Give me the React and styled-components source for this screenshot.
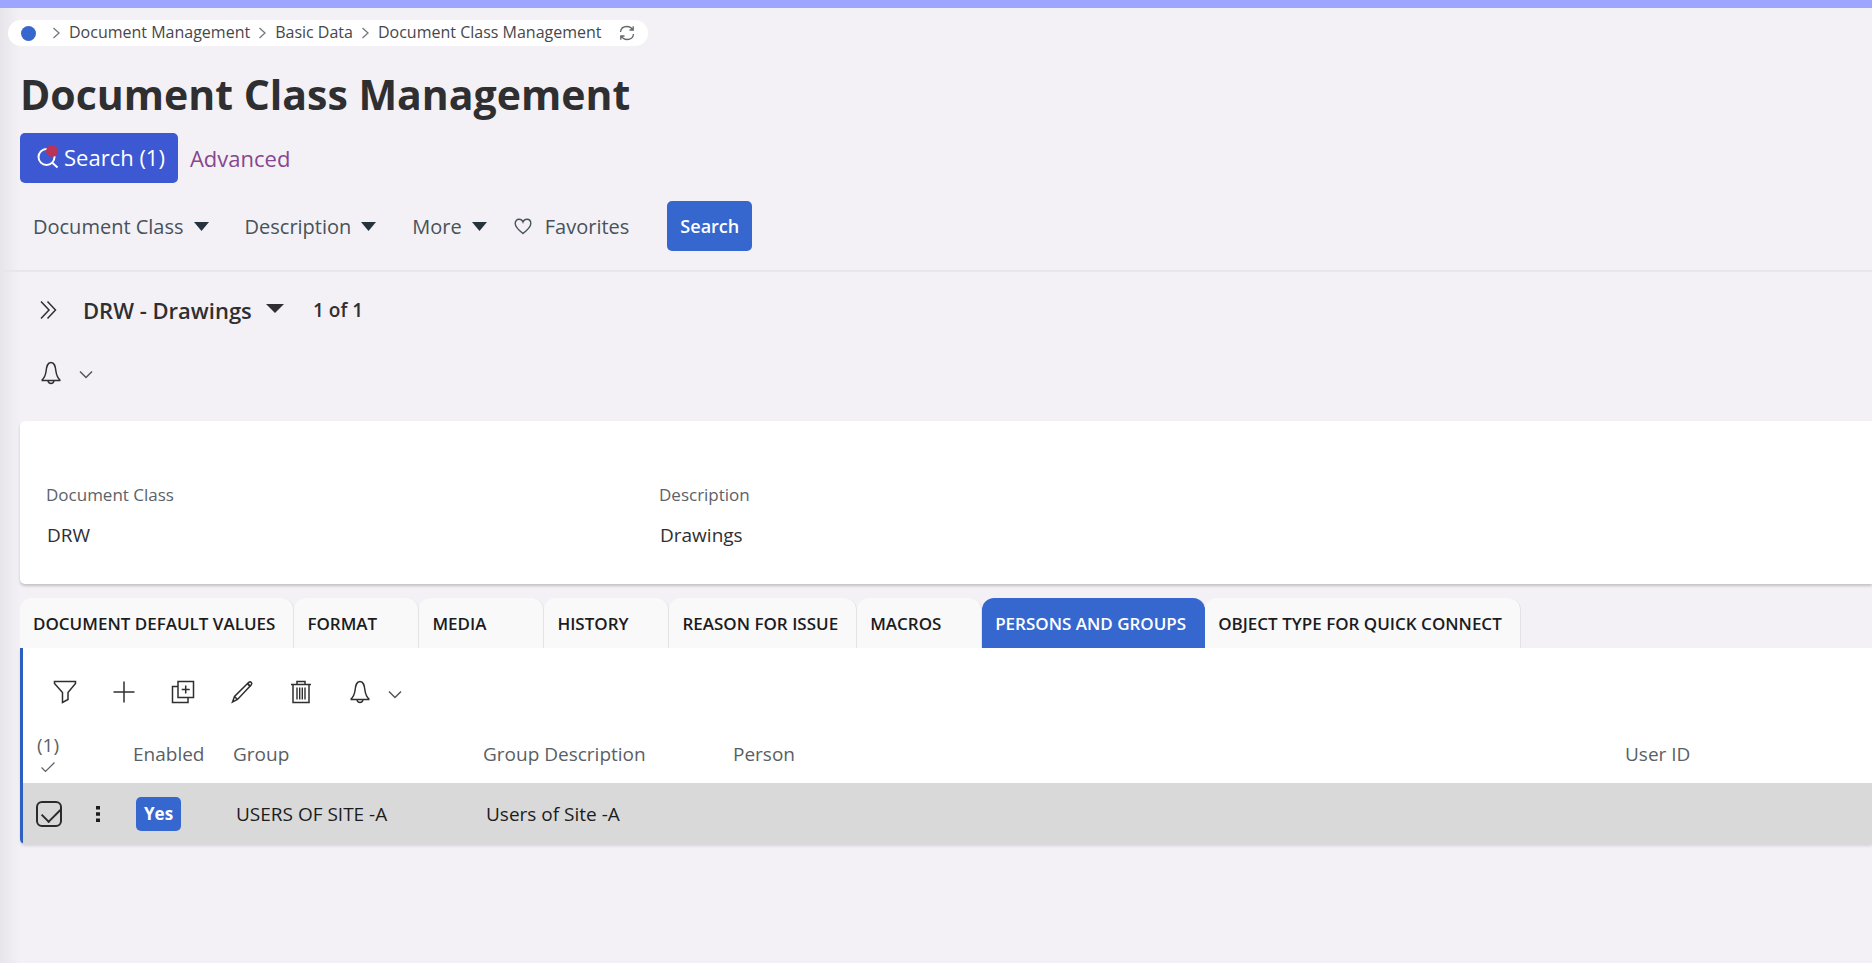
import React, { useState } from "react";
import styled, { createGlobalStyle } from "styled-components";

const tabs = [
  "DOCUMENT DEFAULT VALUES",
  "FORMAT",
  "MEDIA",
  "HISTORY",
  "REASON FOR ISSUE",
  "MACROS",
  "PERSONS AND GROUPS",
  "OBJECT TYPE FOR QUICK CONNECT",
];

const rows = [
  { id: 1, enabled: "Yes", group: "USERS OF SITE -A", description: "Users of Site -A", person: "", userId: "" },
];

const Icon = ({ size = 24, children }) => (
  <svg width={size} height={size} viewBox="0 0 24 24" fill="none" stroke="currentColor" strokeWidth="1.500" aria-hidden="true">
    {children}
  </svg>
);

const BellIcon = () => (
  <Icon>
    <path d="M2.500 19.500h19M2.800 19.300c3-2.700 3.800-5.500 4.300-9.300C7.700 4.800 8.500 1.500 12 1.500s4.300 3.300 4.900 8.500c.5 3.800 1.300 6.600 4.300 9.300" />
    <path d="M9 20c.5 1.700 1.500 2.500 3 2.500s2.500-.8 3-2.500" />
  </Icon>
);

const ChevronDown = () => (
  <svg width="14" height="9" viewBox="0 0 14 9" fill="none" stroke="#55555a" strokeWidth="1.500" aria-hidden="true">
    <path d="M1 1.500l6 6 6-6" />
  </svg>
);

const Separator = () => (
  <svg width="9" height="14" viewBox="0 0 9 14" fill="none" stroke="#77777c" strokeWidth="1.300" aria-hidden="true">
    <path d="M1.500 2l5.500 5-5.500 5" />
  </svg>
);

const Caret = ({ width = 15 }) => (
  <svg width={width} height="9" viewBox="0 0 16 9" preserveAspectRatio="none" aria-hidden="true">
    <path d="M0 0h16l-8 9z" fill="currentColor" />
  </svg>
);

const App = () => {
  const [activeTab, setActiveTab] = useState("PERSONS AND GROUPS");
  const [selected, setSelected] = useState([1]);

  const toggleRow = (id) => {
    setSelected(selected.includes(id) ? selected.filter((s) => s !== id) : [...selected, id]);
  };

  return (
    <>
      <GlobalStyle />
      <Page>
        <Breadcrumbs aria-label="Breadcrumb">
          <HomeLink href="#home" aria-label="Home" />
          <Separator />
          <Crumb href="#documents">Document Management</Crumb>
          <Separator />
          <Crumb href="#basic">Basic Data</Crumb>
          <Separator />
          <Crumb href="#class">Document Class Management</Crumb>
          <RefreshButton aria-label="Refresh">
            <svg width="18" height="18" viewBox="0 0 18 18" fill="none" stroke="currentColor" strokeWidth="1.300">
              <path d="M2.500 8C2.800 4.500 5.500 2.500 9 2.500c2.600 0 4.500 1.200 5.800 3.300M15.200 2.300v3.700h-3.700" />
              <path d="M15.500 10c-.3 3.500-3 5.500-6.500 5.500-2.600 0-4.500-1.200-5.800-3.300M2.800 15.700V12h3.700" />
            </svg>
          </RefreshButton>
        </Breadcrumbs>

        <Title>Document Class Management</Title>

        <SearchModes>
          <SavedSearchButton>
            <svg width="22" height="24" viewBox="0 0 22 24" fill="none" aria-hidden="true">
              <circle cx="9.500" cy="12" r="8" stroke="#fff" strokeWidth="2" />
              <path d="M15 17.500l5.500 5" stroke="#fff" strokeWidth="2" />
              <circle cx="15" cy="6" r="6" fill="#b8345a" />
            </svg>
            Search (1)
          </SavedSearchButton>
          <AdvancedLink href="#advanced">Advanced</AdvancedLink>
        </SearchModes>

        <FilterBar>
          <FilterButton aria-haspopup="true">Document Class <Caret /></FilterButton>
          <FilterButton aria-haspopup="true">Description <Caret /></FilterButton>
          <FilterButton aria-haspopup="true">More <Caret /></FilterButton>
          <FavoritesButton>
            <svg width="18" height="17" viewBox="0 0 18 17" fill="none" stroke="currentColor" strokeWidth="1.400" aria-hidden="true">
              <path d="M9 15.500C4.500 12 1.200 9 1.200 5.500 1.200 3 2.800 1.300 5 1.300c1.900 0 3.300 1 4 2.800.7-1.800 2.100-2.800 4-2.800 2.200 0 3.800 1.700 3.800 4.200 0 3.500-3.300 6.500-7.800 10z" />
            </svg>
            Favorites
          </FavoritesButton>
          <PrimaryButton>Search</PrimaryButton>
        </FilterBar>

        <RecordBar>
          <IconButton aria-label="Show list">
            <svg width="20" height="20" viewBox="0 0 20 20" fill="none" stroke="currentColor" strokeWidth="1.500">
              <path d="M3 1.500l8 8.500-8 8.500M9.500 1.500l8 8.500-8 8.500" />
            </svg>
          </IconButton>
          <RecordPicker>
            <select aria-label="Record" defaultValue="DRW">
              <option value="DRW">DRW - Drawings</option>
            </select>
            <Caret width={18} />
          </RecordPicker>
          <RecordCount>1 of 1</RecordCount>
        </RecordBar>

        <RecordActions>
          <IconButton aria-label="Notifications"><BellIcon /></IconButton>
          <MenuArrow aria-label="Notification options"><ChevronDown /></MenuArrow>
        </RecordActions>

        <Card>
          <Field>
            <dt>Document Class</dt>
            <dd>DRW</dd>
          </Field>
          <Field>
            <dt>Description</dt>
            <dd>Drawings</dd>
          </Field>
        </Card>

        <TabList role="tablist">
          {tabs.map((tab) => (
            <Tab key={tab} role="tab" aria-selected={tab === activeTab} $active={tab === activeTab} onClick={() => setActiveTab(tab)}>
              {tab}
            </Tab>
          ))}
        </TabList>

        <Panel>
          <Toolbar>
            <ToolButton aria-label="Filter">
              <Icon><path d="M1.500 1.500h21v2L15 12.500v7L9.500 22.500v-10l-8-9z" /></Icon>
            </ToolButton>
            <ToolButton aria-label="Add">
              <Icon><path d="M12 1.500v21M1.500 12h21" /></Icon>
            </ToolButton>
            <ToolButton aria-label="Duplicate">
              <Icon>
                <path d="M7 1.500h15.500v16H7zM7 6.500H1.500v16h15.500v-5M14.700 5.500v8M10.700 9.500h8" />
              </Icon>
            </ToolButton>
            <ToolButton aria-label="Edit">
              <Icon>
                <path d="M2.500 22l2-5.500L18.500 2.500c2-1.600 4.200.4 2.800 2.300L7.500 19.500zM4.500 16.500l3 3" />
                <path d="M17.500 3.500l3 3" strokeWidth="2" />
              </Icon>
            </ToolButton>
            <ToolButton aria-label="Delete">
              <Icon>
                <path d="M4 4.500h16v18H4zM2 4.500h20M8 4V1.500h8V4" />
                <path d="M8 7.500v12M10.700 7.500v12M13.300 7.500v12M16 7.500v12" strokeWidth="1.400" />
              </Icon>
            </ToolButton>
            <ToolButton aria-label="Notifications"><BellIcon /></ToolButton>
            <MenuArrow aria-label="Notification options"><ChevronDown /></MenuArrow>
          </Toolbar>

          <Table>
            <colgroup>
              <CheckCol />
              <MenuCol />
              <EnabledCol />
              <GroupCol />
              <GroupCol />
              <col />
              <UserCol />
            </colgroup>
            <thead>
              <tr>
                <th>
                  <SelectCount>
                    ({selected.length})
                    <svg width="16" height="12" viewBox="0 0 16 12" fill="none" stroke="currentColor" strokeWidth="1.200" aria-hidden="true">
                      <path d="M1.500 6.500L5.500 10.500 14.500 1.500" />
                    </svg>
                  </SelectCount>
                </th>
                <th aria-label="Row menu" />
                <th>Enabled</th>
                <th>Group</th>
                <th>Group Description</th>
                <th>Person</th>
                <th>User ID</th>
              </tr>
            </thead>
            <tbody>
              {rows.map((row) => (
                <Row key={row.id} $selected={selected.includes(row.id)}>
                  <td>
                    <CheckBox type="checkbox" aria-label="Select row" checked={selected.includes(row.id)} onChange={() => toggleRow(row.id)} />
                  </td>
                  <td>
                    <IconButton aria-label="Row options">
                      <svg width="4" height="18" viewBox="0 0 4 18" fill="currentColor">
                        <path d="M0 1h4v3.500H0zM0 7.200h4v3.500H0zM0 13.500h4V17H0z" />
                      </svg>
                    </IconButton>
                  </td>
                  <td><Badge>{row.enabled}</Badge></td>
                  <td>{row.group}</td>
                  <td>{row.description}</td>
                  <td>{row.person}</td>
                  <td>{row.userId}</td>
                </Row>
              ))}
            </tbody>
          </Table>
        </Panel>
      </Page>
    </>
  );
};

export default App;

const GlobalStyle = createGlobalStyle`
  * {
    box-sizing: border-box;
  }

  body {
    margin: 0;
    background: #f3f1f5;
    color: #2f2f31;
    font-family: "Open Sans", "Noto Sans", sans-serif;
    font-size: 19px;
  }

  button, select {
    border: 0;
    margin: 0;
    padding: 0;
    background: none;
    color: inherit;
    font: inherit;
    cursor: pointer;
  }

  a {
    text-decoration: none;
  }

  svg {
    display: block;
    flex: none;
  }
`;

const Page = styled.main`
  min-height: 100vh;
  padding-top: 12px;
  border-top: 8px solid #9ca6fe;
  background: linear-gradient(to right, #e7e5e9, #f3f1f5 20px);
`;

const Breadcrumbs = styled.nav`
  display: flex;
  align-items: center;
  gap: 8px;
  width: fit-content;
  height: 26px;
  margin-left: 8px;
  padding: 0 12px 0 13px;
  border-radius: 13px;
  background: #fff;
`;

const HomeLink = styled.a`
  width: 15px;
  height: 15px;
  margin-right: 8px;
  border-radius: 50%;
  background: #3667cf;
`;

const Crumb = styled.a`
  padding-bottom: 2px;
  color: #47474b;
  font-size: 16px;
  line-height: 24px;
`;

const RefreshButton = styled.button`
  margin-left: 8px;
  color: #66666a;
`;

const Title = styled.h1`
  margin: 20px 20px 10px;
  font-size: 41px;
  font-weight: 700;
  line-height: 57px;
`;

const SearchModes = styled.div`
  display: flex;
  align-items: center;
  gap: 12px;
  padding: 0 20px;
`;

const SavedSearchButton = styled.button`
  display: flex;
  align-items: center;
  gap: 5px;
  height: 50px;
  padding: 0 13px 2px 17px;
  border-radius: 5px;
  background: #3c58d3;
  color: #fff;
  font-size: 22px;
`;

const AdvancedLink = styled.a`
  color: #87468f;
  font-size: 22px;
`;

const FilterBar = styled.div`
  display: flex;
  align-items: center;
  gap: 36px;
  padding: 18px 33px 19px;
  border-bottom: 2px solid #e8e6ea;
  color: #48525a;
  font-size: 20px;
`;

const FilterButton = styled.button`
  display: flex;
  align-items: center;
  gap: 10px;

  svg {
    color: #26323c;
  }
`;

const FavoritesButton = styled.button`
  display: flex;
  align-items: center;
  gap: 13px;
  margin: 0 2px 0 -9px;
`;

const PrimaryButton = styled.button`
  height: 50px;
  padding: 0 13px;
  border-radius: 5px;
  background: #3667cf;
  color: #fff;
  font-size: 18px;
  font-weight: 600;
`;

const IconButton = styled.button`
  display: flex;
  align-items: center;
  justify-content: center;
`;

const MenuArrow = styled(IconButton)`
  padding-top: 4px;
`;

const RecordBar = styled.div`
  display: flex;
  align-items: center;
  gap: 25px;
  padding: 22px 38px 0;
  line-height: 32px;
`;

const RecordPicker = styled.div`
  display: flex;
  align-items: center;
  gap: 14px;
  font-size: 22px;
  font-weight: 600;

  svg {
    margin-bottom: 4px;
  }

  select {
    appearance: none;
    outline: 0;
  }
`;

const RecordCount = styled.span`
  margin-left: 4px;
  font-weight: 600;
`;

const RecordActions = styled.div`
  display: flex;
  align-items: center;
  gap: 16px;
  height: 95px;
  padding: 0 39px 2px;
`;

const Card = styled.dl`
  display: grid;
  grid-template-columns: repeat(3, 1fr);
  column-gap: 13px;
  height: 163px;
  margin: 0 0 14px 20px;
  padding: 61px 0 0 26px;
  border-radius: 5px 0 0 5px;
  background: #fff;
  box-shadow: 0 2px 3px rgba(0, 0, 0, 0.2);
`;

const Field = styled.div`
  dt {
    color: #5c6268;
    font-size: 17px;
    line-height: 26px;
  }

  dd {
    margin: 13px 0 0 1px;
    line-height: 28px;
  }
`;

const TabList = styled.div`
  display: flex;
  margin-left: 20px;
`;

const Tab = styled.button`
  height: 50px;
  min-width: 125px;
  padding: 0 18px 0 13px;
  border-right: 1px solid ${(pr) => (pr.$active ? "#3667cf" : "#e3e2e5")};
  border-radius: 12px 12px 0 0;
  background: ${(pr) => (pr.$active ? "#3667cf" : "#f9f9f9")};
  color: ${(pr) => (pr.$active ? "#fff" : "#1c1c1e")};
  font-size: 17px;
  font-weight: 600;
  text-align: left;
  white-space: nowrap;
`;

const Panel = styled.section`
  margin-left: 20px;
  border-left: 3px solid #2d5fc0;
  border-radius: 0 0 0 5px;
  background: #fff;
  box-shadow: 0 2px 3px rgba(0, 0, 0, 0.12);
`;

const Toolbar = styled.div`
  display: flex;
  align-items: center;
  gap: 19px;
  height: 86px;
  padding: 2px 0 0 22px;
`;

const ToolButton = styled(IconButton)`
  width: 40px;
  height: 40px;

  & + ${MenuArrow} {
    margin-left: -11px;
  }
`;

const CheckCol = styled.col`
  width: 60px;
`;

const MenuCol = styled.col`
  width: 40px;
`;

const EnabledCol = styled.col`
  width: 100px;
`;

const GroupCol = styled.col`
  width: 250px;
`;

const UserCol = styled.col`
  width: 257px;
`;

const Table = styled.table`
  width: 100%;
  table-layout: fixed;
  border-collapse: collapse;
  text-align: left;

  th {
    height: 49px;
    padding: 0 10px 10px;
    color: #595f65;
    font-weight: 400;
    line-height: 22px;
  }

  td {
    height: 61px;
    padding: 0 13px;
    color: #1c1c1e;
  }
`;

const SelectCount = styled.div`
  display: flex;
  flex-direction: column;
  align-items: center;
  gap: 5px;
  width: 30px;
`;

const Row = styled.tr`
  background: ${(pr) => (pr.$selected ? "#d9d9d9" : "#fff")};
`;

const CheckBox = styled.input`
  display: block;
  appearance: none;
  width: 26px;
  height: 26px;
  margin: 0;
  border: 2px solid #2b2b2d;
  border-radius: 6px;
  cursor: pointer;

  &:checked::before {
    content: "";
    display: block;
    width: 9px;
    height: 17px;
    margin: 0 0 0 8px;
    border: solid #2b2b2d;
    border-width: 0 2px 2px 0;
    transform: rotate(45deg);
  }
`;

const Badge = styled.span`
  display: inline-block;
  padding: 0 8px;
  border-radius: 5px;
  background: #3667cf;
  color: #fff;
  font-size: 17px;
  font-weight: 700;
  line-height: 34px;
`;
